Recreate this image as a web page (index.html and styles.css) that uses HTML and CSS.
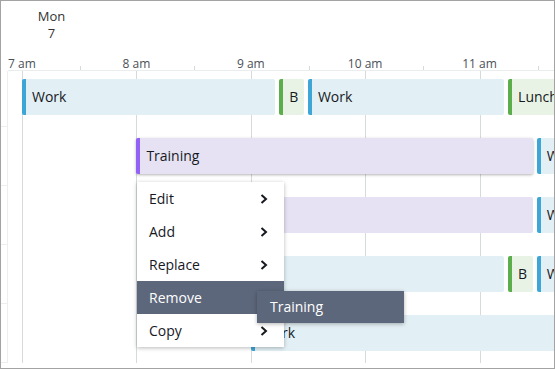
FILE: index.html
```html
<!DOCTYPE html>
<html>
<head>
<meta charset="utf-8">
<link rel="stylesheet" href="styles.css">
</head>
<body>
<div class="frame">
  <div class="head">
    <div class="day"><div>Mon</div><div>7</div></div>
    <div class="axis">
      <div class="hour"><span>7 am</span></div>
      <div class="hour"><span>8 am</span></div>
      <div class="hour"><span>9 am</span></div>
      <div class="hour"><span>10 am</span></div>
      <div class="hour"><span>11 am</span></div>
    </div>
  </div>
  <div class="rows">
    <div class="row first">
      <div class="agent"></div>
      <div class="lane"><div class="track">
        <div class="ev work" style="grid-column:1 / 10">Work</div>
        <div class="ev brk" style="grid-column:10 / 11">B</div>
        <div class="ev work" style="grid-column:11 / 18">Work</div>
        <div class="ev brk" style="grid-column:18 / 22">Lunch</div>
      </div></div>
    </div>
    <div class="row">
      <div class="agent"></div>
      <div class="lane"><div class="track">
        <div class="ev train selected" style="grid-column:5 / 19">Training</div>
        <div class="ev work" style="grid-column:19 / 25">Work</div>
      </div></div>
    </div>
    <div class="row">
      <div class="agent"></div>
      <div class="lane"><div class="track">
        <div class="ev train" style="grid-column:6 / 19">Training</div>
        <div class="ev work" style="grid-column:19 / 25">Work</div>
      </div></div>
    </div>
    <div class="row">
      <div class="agent"></div>
      <div class="lane"><div class="track">
        <div class="ev work" style="grid-column:6 / 18">Work</div>
        <div class="ev brk" style="grid-column:18 / 19">B</div>
        <div class="ev work" style="grid-column:19 / 25">Work</div>
      </div></div>
    </div>
    <div class="row">
      <div class="agent"></div>
      <div class="lane"><div class="track">
        <div class="ev work" style="grid-column:9 / 25">Work</div>
      </div></div>
    </div>
  </div>

  <div class="menu">
    <div class="item"><span>Edit</span><svg class="chev" width="8" height="10" viewBox="0 0 8 10"><path d="M1.5 1 L6 5 L1.5 9" /></svg></div>
    <div class="item"><span>Add</span><svg class="chev" width="8" height="10" viewBox="0 0 8 10"><path d="M1.5 1 L6 5 L1.5 9" /></svg></div>
    <div class="item"><span>Replace</span><svg class="chev" width="8" height="10" viewBox="0 0 8 10"><path d="M1.5 1 L6 5 L1.5 9" /></svg></div>
    <div class="item active"><span>Remove</span>
      <div class="submenu"><div class="subitem">Training</div></div>
    </div>
    <div class="item"><span>Copy</span><svg class="chev" width="8" height="10" viewBox="0 0 8 10"><path d="M1.5 1 L6 5 L1.5 9" /></svg></div>
  </div>
</div>
</body>
</html>
```
FILE: styles.css
```css
html, body {
  margin: 0;
  padding: 0;
  background: #ffffff;
}

.frame {
  position: relative;
  width: 555px;
  height: 369px;
  box-sizing: border-box;
  border: 1px solid #a3a3a3;
  overflow: hidden;
  background: #ffffff;
  font-family: "Open Sans", "Noto Sans", sans-serif;
  color: #16191f;
}

.head {
  height: 70px;
}

.day {
  width: 29px;
  margin-left: 36px;
  padding-top: 7px;
  text-align: center;
  font-size: 13px;
  line-height: 17px;
  color: #333333;
}

.axis {
  display: flex;
  height: 14px;
  margin-left: 7px;
  padding-left: 14px;
  padding-top: 14px;
  border-bottom: 1px solid #eaeded;
  font-size: 12px;
  line-height: 15px;
  color: #4b5058;
  background-image: repeating-linear-gradient(to right, transparent 0, transparent 58px, #d5dbdb 58px, #d5dbdb 59px, transparent 59px, transparent 114.4px);
  background-size: 100% 4px;
  background-position: 14px 100%;
  background-repeat: no-repeat;
  white-space: nowrap;
}

.hour {
  flex: 0 0 114.4px;
}

.hour span {
  display: inline-block;
  transform: translateX(-50%);
}

.rows {
  display: flex;
  flex-direction: column;
}

.row {
  display: grid;
  grid-template-columns: 7px 1fr;
  height: 59px;
}

.row.first {
  height: 56px;
}

.agent {
  border-right: 1px solid #eceeef;
  border-bottom: 1px solid #eceeef;
}

.lane {
  padding-left: 14px;
  overflow: hidden;
}

.track {
  display: grid;
  grid-template-columns: repeat(24, 28.6px);
  grid-template-rows: 36px;
  height: 100%;
  box-sizing: border-box;
  padding-top: 11px;
  background-image: repeating-linear-gradient(to right, #d5dbdb 0, #d5dbdb 1px, transparent 1px, transparent 114.4px);
}

.row.first .track {
  padding-top: 8px;
}

.ev {
  height: 36px;
  margin-right: 4px;
  box-sizing: border-box;
  border-left: 4px solid;
  border-radius: 2px;
  padding-left: 6px;
  font-size: 14px;
  line-height: 36px;
  white-space: nowrap;
  overflow: hidden;
}

.work {
  background: #e2eff4;
  border-left-color: #3ea6d6;
}

.brk {
  background: #e8f3e5;
  border-left-color: #5cad4c;
}

.train {
  background: #e6e2f3;
  border-left-color: #9261f5;
}

.train.selected {
  box-shadow: 0 1px 3px rgba(0, 0, 0, 0.3);
}

.menu {
  position: absolute;
  left: 136px;
  top: 181px;
  width: 147px;
  background: #ffffff;
  box-shadow: 0 1px 4px rgba(0, 0, 0, 0.28);
  font-size: 14px;
}

.item {
  position: relative;
  display: flex;
  align-items: center;
  justify-content: space-between;
  height: 33px;
  padding: 0 16px 0 12px;
  color: #16191f;
}

.item.active {
  background: #5d677b;
  color: #ffffff;
}

.chev path {
  fill: none;
  stroke: #16191f;
  stroke-width: 2;
}

.submenu {
  position: absolute;
  left: 120px;
  top: 10px;
  width: 147px;
  background: #5d677b;
  box-shadow: 0 1px 4px rgba(0, 0, 0, 0.3);
  z-index: 2;
}

.subitem {
  height: 32px;
  line-height: 32px;
  padding-left: 13px;
  color: #ffffff;
  font-size: 14px;
}
```
